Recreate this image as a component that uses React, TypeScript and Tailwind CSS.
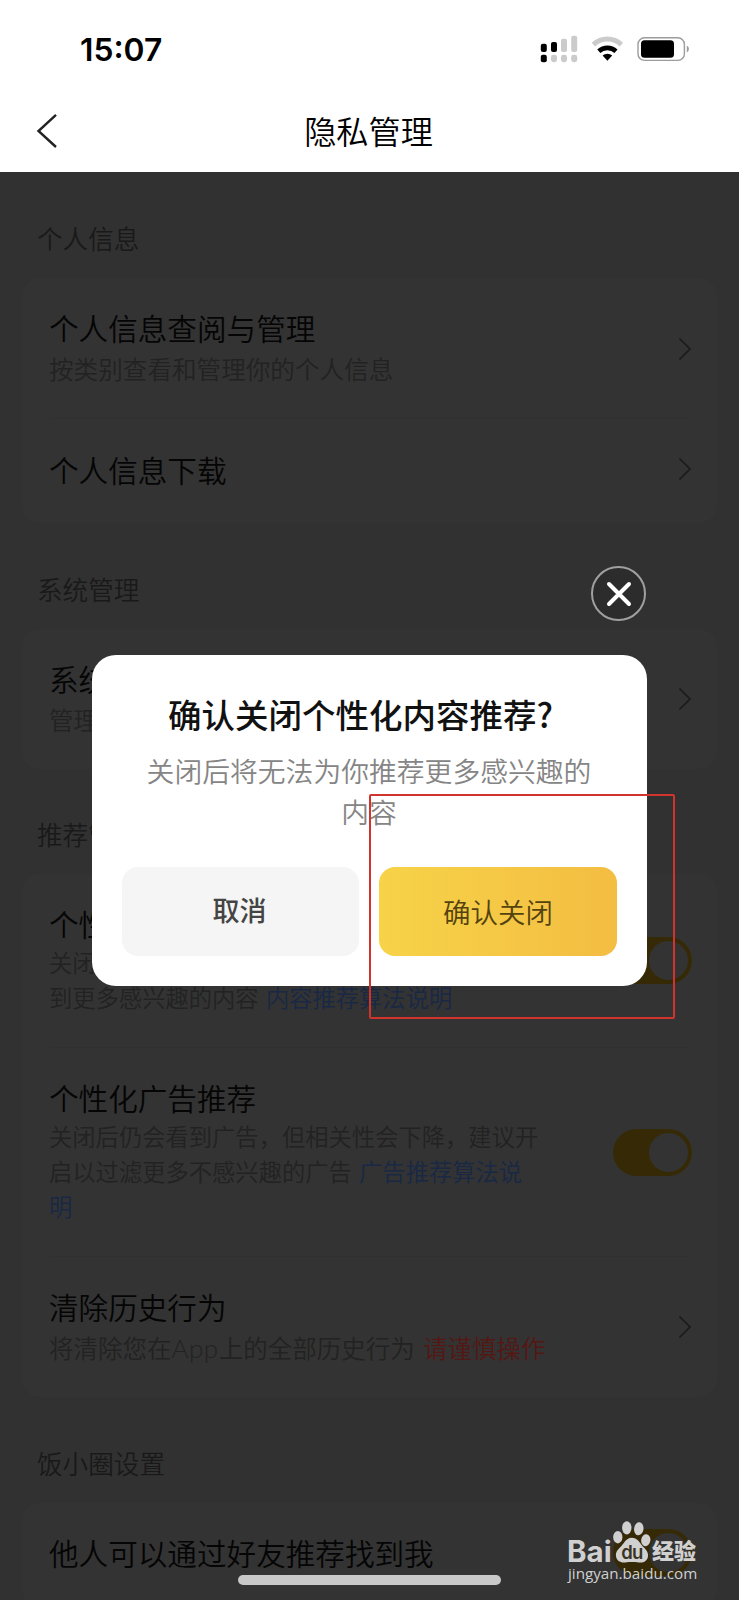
import type { ReactNode } from 'react'

function StatusIcons() {
  return (
    <svg className="w-[150px] h-[28px]" viewBox="540 35 150 28" fill="none">
      <g fill="#000">
        <rect x="540.8" y="43.8" width="6" height="8.2" rx="2" />
        <rect x="551" y="42" width="6" height="10" rx="2" />
        <rect x="540.8" y="54.8" width="6" height="7.4" rx="2" />
      </g>
      <g fill="#cbcbcb">
        <rect x="561" y="38.8" width="6" height="13.2" rx="2" />
        <rect x="571.2" y="35.8" width="6" height="16.2" rx="2" />
        <rect x="551" y="54.8" width="6" height="7.4" rx="2.4" />
        <rect x="561" y="54.8" width="6" height="7.4" rx="2.4" />
        <rect x="571.2" y="54.8" width="6" height="7.4" rx="2.4" />
      </g>
      <path d="M593.4 44.6a20.6 20.6 0 0 1 28 0" stroke="#cbcbcb" strokeWidth="5" />
      <path d="M598.8 51.2a12.8 12.8 0 0 1 17.2 0" stroke="#000" strokeWidth="4.6" />
      <path d="M602.6 55.6a7.4 7.4 0 0 1 9.6 0l-4.8 5.2z" fill="#000" />
      <rect x="638" y="37.8" width="46.4" height="22.6" rx="6.5" stroke="#9c9c9c" strokeWidth="1.4" />
      <rect x="641" y="40.2" width="33" height="17.6" rx="3.6" fill="#000" />
      <path d="M686.8 45.8c2.8 1 2.8 5.6 0 6.6z" fill="#9c9c9c" />
    </svg>
  )
}

function Chevron() {
  return (
    <svg className="w-[14px] h-[24px] mr-[9px] shrink-0" viewBox="0 0 14 24" fill="none">
      <path d="M1.5 1.5L12 12L1.5 22.5" stroke="#1a1a1a" strokeWidth="1.6" />
    </svg>
  )
}

function Toggle() {
  return (
    <div className="w-[79px] h-[47px] mr-[9px] mb-px shrink-0 rounded-full bg-[#362a06] flex items-center justify-end pr-1">
      <div className="size-[39px] rounded-full bg-[#333333]" />
    </div>
  )
}

function Section({ title, className, children }: { title: string; className: string; children: ReactNode }) {
  return (
    <section className={className}>
      <h2 className="h-[38px] pl-[37px] text-[25.6px] leading-[36px] font-[350] text-[#191919]">{title}</h2>
      <div className="mt-5 mx-[22px] rounded-[18px] bg-[#333333]">{children}</div>
    </section>
  )
}

function Row({ title, height, right, border, children }: { title: string; height: string; right: ReactNode; border?: boolean; children?: ReactNode }) {
  return (
    <div className={`relative flex items-center justify-between pl-[27px] pr-4 ${height}`}>
      <div>
        <h3 className="text-[29.6px] leading-[43px] font-[350] text-[#050505] whitespace-nowrap">{title}</h3>
        {children}
      </div>
      {right}
      {border && <div className="absolute left-7 right-[30px] bottom-0 h-px bg-[#303030]" />}
    </div>
  )
}

function Paw() {
  return (
    <svg className="absolute left-[45px] top-0 w-[38px] h-[42px]" viewBox="0 0 38 42">
      <g fill="#d0d0d0">
        <ellipse cx="4.8" cy="16.2" rx="4.6" ry="6.2" />
        <ellipse cx="13.8" cy="6.8" rx="4.7" ry="6.6" />
        <ellipse cx="25.8" cy="7.8" rx="4.7" ry="6.5" transform="rotate(8 25.8 7.8)" />
        <ellipse cx="32.8" cy="19.2" rx="4.6" ry="6" transform="rotate(8 32.8 19.2)" />
        <path d="M18.6 16.8c5.8 0 8 4.8 11 8.4 2.8 3 5.8 5 5.4 9.8-.5 5.4-4.8 7-9.2 6.400-4.600-.6-9-.6-13.600 0-4.800.5-8.600-1.800-9.200-6.200-.6-4.400 2-6.800 5-9.800 3.200-3.200 5.200-8.600 10.600-8.600z" />
      </g>
      <text x="19" y="38" textAnchor="middle" fontFamily="Inter, sans-serif" fontWeight="600" fontSize="18.5" letterSpacing="-0.6" fill="#3a3425">du</text>
    </svg>
  )
}

export default function App() {
  return (
    <div className="relative w-[739px] h-[1600px] overflow-hidden bg-[#313131] font-['Noto_Sans_CJK_SC',sans-serif]">
      <header className="h-[172px] bg-white">
        <div className="h-[98px] flex items-start justify-between pl-[80px] pr-[49px]">
          <span className="mt-[30px] font-['Inter',sans-serif] font-semibold text-[31.8px] leading-[40px] text-black">15:07</span>
          <div className="mt-[35px]">
            <StatusIcons />
          </div>
        </div>
        <div className="relative h-[66px] flex items-center justify-center">
          <svg className="absolute left-[36px] top-[15px] w-[22px] h-[36px]" viewBox="0 0 22 36" fill="none">
            <path d="M20 1.8L2.5 18L20 34" stroke="#222" strokeWidth="2.4" />
          </svg>
          <h1 className="mb-[2px] mr-[2px] text-[32.2px] leading-[46px] font-[350] text-black">隐私管理</h1>
        </div>
      </header>

      <main>
        <Section title="个人信息" className="pt-[48px]">
          <Row title="个人信息查阅与管理" height="h-[141px]" right={<Chevron />} border>
            <p className="mb-[5px] text-[24.6px] leading-[38px] font-[350] text-[#222222]">按类别查看和管理你的个人信息</p>
          </Row>
          <Row title="个人信息下载" height="h-[104px] pb-[4px]" right={<Chevron />} />
        </Section>

        <Section title="系统管理" className="pt-[48px]">
          <Row title="系统权限管理" height="h-[140px]" right={<Chevron />}>
            <p className="mb-[4px] text-[24.6px] leading-[38px] font-[350] text-[#222222]">管理系统权限</p>
          </Row>
        </Section>

        <Section title="推荐管理" className="pt-[47px]">
          <Row title="个性化内容推荐" height="h-[174px]" right={<Toggle />} border>
            <p className="mb-[6px] text-[23.3px] leading-[35px] font-[350] text-[#222222] whitespace-nowrap">
              关闭后将无法推荐个性化内容，可能无法看
              <br />
              到更多感兴趣的内容 <span className="ml-[2px] text-[#182845]">内容推荐算法说明</span>
            </p>
          </Row>
          <Row title="个性化广告推荐" height="h-[209px]" right={<Toggle />} border>
            <p className="mb-[6px] text-[23.3px] leading-[35px] font-[350] text-[#222222] whitespace-nowrap">
              关闭后仍会看到广告，但相关性会下降，建议开
              <br />
              启以过滤更多不感兴趣的广告 <span className="ml-[2px] text-[#182845]">广告推荐算法说</span>
              <br />
              <span className="text-[#182845]">明</span>
            </p>
          </Row>
          <Row title="清除历史行为" height="h-[140px]" right={<Chevron />}>
            <p className="mb-px text-[24.5px] leading-[39px] font-[350] text-[#222222] whitespace-nowrap">
              将清除您在<span className="font-['Lato'] text-[26px] tracking-[0.5px]">App</span>上的全部历史行为 <span className="ml-[3px] text-[#551714]">请谨慎操作</span>
            </p>
          </Row>
        </Section>

        <Section title="饭小圈设置" className="pt-[48px]">
          <Row title="他人可以通过好友推荐找到我" height="h-[104px] pb-[5px]" right={<Toggle />} />
        </Section>
      </main>

      {/* confirm dialog */}
      <button className="absolute left-[591px] top-[566px] size-[55px] rounded-full border-2 border-[#a0a0a0] bg-[#2c2c2c] flex items-center justify-center">
        <svg className="size-[26px]" viewBox="0 0 26 26" fill="none">
          <path d="M3 3L23 23M23 3L3 23" stroke="#fff" strokeWidth="4" strokeLinecap="round" />
        </svg>
      </button>
      <div className="absolute left-[92px] top-[655px] w-[555px] h-[331px] rounded-[24px] bg-white px-[30px] pt-[35px]">
        <h2 className="mr-[18px] text-center text-[33.5px] leading-[48px] font-medium text-[#111111] whitespace-nowrap">确认关闭个性化内容推荐?</h2>
        <p className="mt-[12px] mr-px text-center text-[27.8px] leading-[40.5px] font-[350] text-[#858585] whitespace-nowrap">
          关闭后将无法为你推荐更多感兴趣的
          <br />
          内容
        </p>
        <div className="mt-[36px] flex gap-5">
          <button className="w-[237px] h-[89px] pb-[2px] pr-[2px] rounded-[16px] bg-[#f5f5f5] text-[27px] font-medium text-[#444444]">取消</button>
          <button className="w-[238px] h-[89px] rounded-[16px] bg-linear-to-r from-[#f7d348] to-[#f3bd42] text-[27.5px] font-[350] text-[#54430f]">确认关闭</button>
        </div>
      </div>

      <div className="absolute left-[369px] top-[794px] w-[306px] h-[225px] border-2 border-[#d0342c] rounded-[2px]" />

      <div className="absolute left-[238px] top-[1575px] w-[263px] h-[10px] rounded-full bg-[#c8c8c8]" />

      {/* watermark */}
      <div className="absolute left-[568px] top-[1521px] w-[132px] h-[66px] text-[#d0d0d0]">
        <span className="absolute left-[-1px] top-[13px] font-['Inter',sans-serif] font-bold text-[29.5px] leading-[34px]">Bai</span>
        <Paw />
        <span className="absolute left-[84px] top-[11px] font-black text-[22px] leading-[34px] whitespace-nowrap">经验</span>
        <span className="absolute left-0 top-[41px] font-['Open_Sans',sans-serif] font-medium text-[15.2px] leading-[22px]">jingyan.baidu.com</span>
      </div>
    </div>
  )
}
